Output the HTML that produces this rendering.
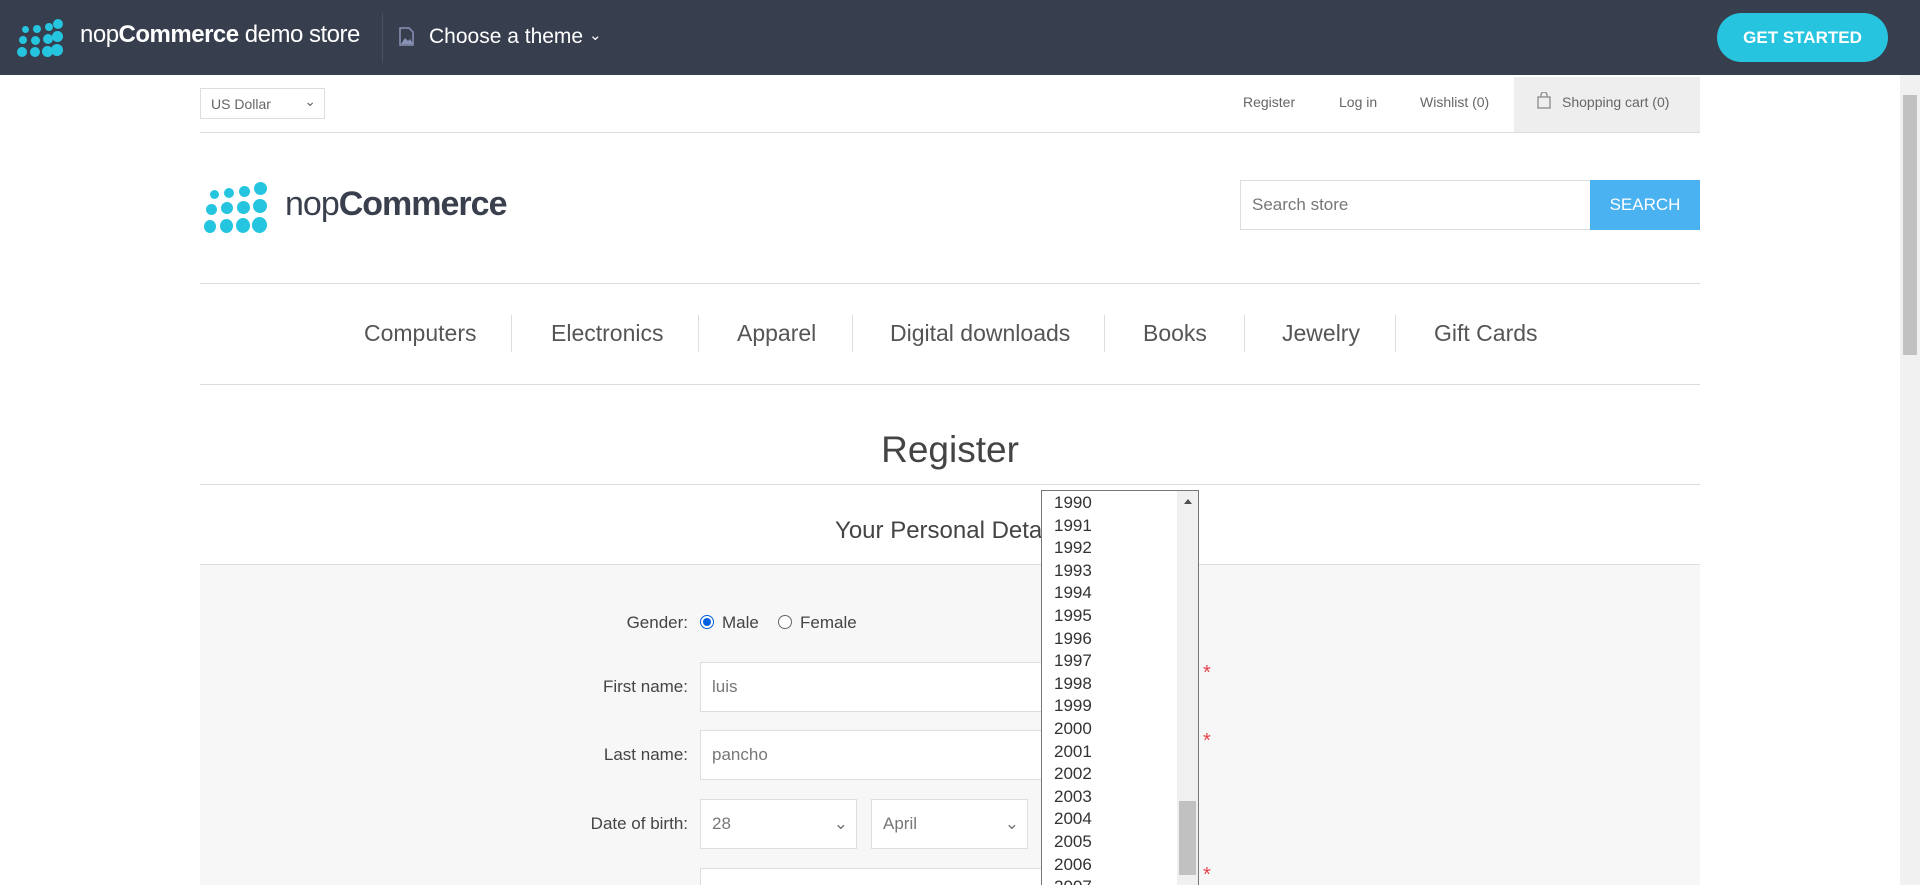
<!DOCTYPE html>
<html><head><meta charset="utf-8"><style>
*{box-sizing:border-box;margin:0;padding:0}
html{overflow:hidden;height:885px}
body{width:1920px;height:885px;overflow:hidden;background:#fff;font-family:"Liberation Sans",Arial,sans-serif;color:#444;position:relative}
.abs{position:absolute}
.top{left:0;top:0;width:1920px;height:75px;background:#373e4d}
.dot{position:absolute;border-radius:50%;background:#25c5e0}
.line{position:absolute;left:200px;width:1500px;height:1px;background:#ddd}
.menu{top:320px;font-size:23px;color:#555}
.sep{top:315px;width:1px;height:37px;background:#ddd}
.lbl{font-size:17px;color:#444;text-align:right;width:300px;left:388px}
.inp{background:#fff;border:1px solid #ddd;height:50px;font-size:17px;color:#777;padding:0 11px;line-height:48px}
.star{color:#e4434b;font-size:20px}
.yr{position:absolute;left:12px;font-size:17px;color:#333}
</style></head><body>
<div class="abs top">
  <div class="dot" style="left:17px;top:47px;width:10px;height:10px"></div>
  <div class="dot" style="left:19px;top:36px;width:8px;height:8px"></div>
  <div class="dot" style="left:22px;top:26px;width:7px;height:7px"></div>
  <div class="dot" style="left:30px;top:47px;width:10px;height:10px"></div>
  <div class="dot" style="left:31px;top:36px;width:9px;height:9px"></div>
  <div class="dot" style="left:33px;top:25px;width:8px;height:8px"></div>
  <div class="dot" style="left:42px;top:46px;width:11px;height:11px"></div>
  <div class="dot" style="left:43px;top:34px;width:10px;height:10px"></div>
  <div class="dot" style="left:45px;top:23px;width:8px;height:8px"></div>
  <div class="dot" style="left:51px;top:44px;width:12px;height:12px"></div>
  <div class="dot" style="left:52px;top:31px;width:11px;height:11px"></div>
  <div class="dot" style="left:53px;top:19px;width:10px;height:10px"></div>
  <div class="abs" style="left:80px;top:21px;font-size:24px;color:#fff;letter-spacing:-0.5px">nop<b>Commerce</b> demo store</div>
  <div class="abs" style="left:382px;top:13px;width:1px;height:50px;background:#4b5263"></div>
  <svg class="abs" style="left:399px;top:27px" width="15" height="19" viewBox="0 0 15 19"><path d="M1 1h9l4 4v13H1z" fill="none" stroke="#8a93b8" stroke-width="1.5"/><path d="M2 17l4-6 3 3 2-2 3 5z" fill="#8a93b8"/></svg>
  <div class="abs" style="left:429px;top:25px;font-size:21px;color:#fff">Choose a theme <span style="font-size:15px;position:relative;top:-3px">&#8964;</span></div>
  <div class="abs" style="left:1717px;top:13px;width:171px;height:49px;border-radius:25px;background:#27c4e0;color:#fff;font-weight:bold;font-size:17px;text-align:center;line-height:49px">GET STARTED</div>
</div>
<div class="abs" style="left:1900px;top:75px;width:20px;height:810px;background:#f1f1f1"></div>
<div class="abs" style="left:1903px;top:95px;width:14px;height:260px;background:#c1c1c1"></div>

<div class="abs" style="left:200px;top:88px;width:125px;height:31px;border:1px solid #ddd;font-size:14px;color:#666;padding:7px 10px">US Dollar<span style="position:absolute;right:8px;top:4px;font-size:14px">&#8964;</span></div>
<div class="abs" style="top:94px;left:1243px;font-size:14px;color:#666">Register</div>
<div class="abs" style="top:94px;left:1339px;font-size:14px;color:#666">Log in</div>
<div class="abs" style="top:94px;left:1420px;font-size:14px;color:#666">Wishlist (0)</div>
<div class="abs" style="left:1514px;top:77px;width:186px;height:55px;background:#eee"></div>
<svg class="abs" style="left:1537px;top:92px" width="14" height="17" viewBox="0 0 14 17"><path d="M1 5h12v11H1z M4 5V3a3 3 0 0 1 6 0v2" fill="none" stroke="#888" stroke-width="1.3"/></svg>
<div class="abs" style="top:94px;left:1562px;font-size:14px;color:#666">Shopping cart (0)</div>
<div class="line" style="top:132px"></div>

<div class="dot" style="left:204px;top:220px;width:12px;height:13px"></div>
<div class="dot" style="left:206px;top:204px;width:11px;height:11px"></div>
<div class="dot" style="left:210px;top:190px;width:9px;height:9px"></div>
<div class="dot" style="left:220px;top:219px;width:13px;height:14px"></div>
<div class="dot" style="left:221px;top:202px;width:12px;height:12px"></div>
<div class="dot" style="left:224px;top:188px;width:10px;height:10px"></div>
<div class="dot" style="left:236px;top:218px;width:14px;height:15px"></div>
<div class="dot" style="left:237px;top:201px;width:13px;height:13px"></div>
<div class="dot" style="left:239px;top:186px;width:11px;height:11px"></div>
<div class="dot" style="left:252px;top:217px;width:15px;height:16px"></div>
<div class="dot" style="left:253px;top:199px;width:14px;height:14px"></div>
<div class="dot" style="left:254px;top:182px;width:13px;height:13px"></div>
<div class="abs" style="left:285px;top:185px;font-size:34px;color:#3a3f4d;letter-spacing:-1px">nop<b>Commerce</b></div>

<div class="abs inp" style="left:1240px;top:180px;width:351px;height:50px;font-size:17px;color:#777;line-height:48px">Search store</div>
<div class="abs" style="left:1590px;top:180px;width:110px;height:50px;background:#4ab2f1;color:#fff;font-size:17px;text-align:center;line-height:50px">SEARCH</div>
<div class="line" style="top:283px"></div>

<div class="abs menu" style="left:364px">Computers</div>
<div class="abs sep" style="left:511px"></div>
<div class="abs menu" style="left:551px">Electronics</div>
<div class="abs sep" style="left:698px"></div>
<div class="abs menu" style="left:737px">Apparel</div>
<div class="abs sep" style="left:852px"></div>
<div class="abs menu" style="left:890px">Digital downloads</div>
<div class="abs sep" style="left:1104px"></div>
<div class="abs menu" style="left:1143px">Books</div>
<div class="abs sep" style="left:1244px"></div>
<div class="abs menu" style="left:1282px">Jewelry</div>
<div class="abs sep" style="left:1395px"></div>
<div class="abs menu" style="left:1434px">Gift Cards</div>
<div class="line" style="top:384px"></div>

<div class="abs" style="left:200px;width:1500px;text-align:center;top:429px;font-size:37px;color:#444">Register</div>
<div class="line" style="top:484px"></div>
<div class="abs" style="left:200px;width:1500px;text-align:center;top:517px;font-size:24px;color:#444">Your Personal Details</div>
<div class="line" style="top:564px"></div>
<div class="abs" style="left:200px;top:565px;width:1500px;height:320px;background:#f7f7f7"></div>

<div class="abs lbl" style="top:613px">Gender:</div>
<div class="abs" style="left:700px;top:615px;width:14px;height:14px;border-radius:50%;border:1px solid #0060df;background:#fff"><div style="margin:2px;width:8px;height:8px;border-radius:50%;background:#0060df"></div></div>
<div class="abs" style="left:722px;top:613px;font-size:17px;color:#444">Male</div>
<div class="abs" style="left:778px;top:615px;width:14px;height:14px;border-radius:50%;border:1px solid #666;background:#fff"></div>
<div class="abs" style="left:800px;top:613px;font-size:17px;color:#444">Female</div>

<div class="abs lbl" style="top:677px">First name:</div>
<div class="abs inp" style="left:700px;top:662px;width:400px">luis</div>
<div class="abs star" style="left:1203px;top:662px">*</div>
<div class="abs lbl" style="top:745px">Last name:</div>
<div class="abs inp" style="left:700px;top:730px;width:400px">pancho</div>
<div class="abs star" style="left:1203px;top:730px">*</div>
<div class="abs lbl" style="top:814px">Date of birth:</div>
<div class="abs inp" style="left:700px;top:799px;width:157px">28<span style="position:absolute;right:8px;top:0;color:#777">&#8964;</span></div>
<div class="abs inp" style="left:871px;top:799px;width:157px">April<span style="position:absolute;right:8px;top:0;color:#777">&#8964;</span></div>
<div class="abs inp" style="left:700px;top:868px;width:400px;height:17px;border-bottom:none"></div>
<div class="abs star" style="left:1203px;top:866px;line-height:19px;height:19px;overflow:hidden">*</div>

<div class="abs" style="left:1041px;top:490px;width:158px;height:395px;background:#fff;border:1px solid #767676;border-bottom:none;overflow:hidden">
  <div class="abs" style="left:135px;top:0;width:21px;height:395px;background:#f0f0f0"></div>
  <div class="abs" style="left:146px;top:8px;width:0;height:0;border-left:4px solid transparent;border-right:4px solid transparent;border-bottom:5px solid #505050;margin-left:-4px"></div>
  <div class="abs" style="left:137px;top:310px;width:17px;height:74px;background:#c1c1c1"></div>
  <div class="yr" style="top:2px">1990</div><div class="yr" style="top:24.6px">1991</div><div class="yr" style="top:47.2px">1992</div><div class="yr" style="top:69.8px">1993</div><div class="yr" style="top:92.4px">1994</div><div class="yr" style="top:115px">1995</div><div class="yr" style="top:137.6px">1996</div><div class="yr" style="top:160.2px">1997</div><div class="yr" style="top:182.8px">1998</div><div class="yr" style="top:205.4px">1999</div><div class="yr" style="top:228px">2000</div><div class="yr" style="top:250.6px">2001</div><div class="yr" style="top:273.2px">2002</div><div class="yr" style="top:295.8px">2003</div><div class="yr" style="top:318.4px">2004</div><div class="yr" style="top:341px">2005</div><div class="yr" style="top:363.6px">2006</div><div class="yr" style="top:386.2px">2007</div>
</div>
</body></html>
